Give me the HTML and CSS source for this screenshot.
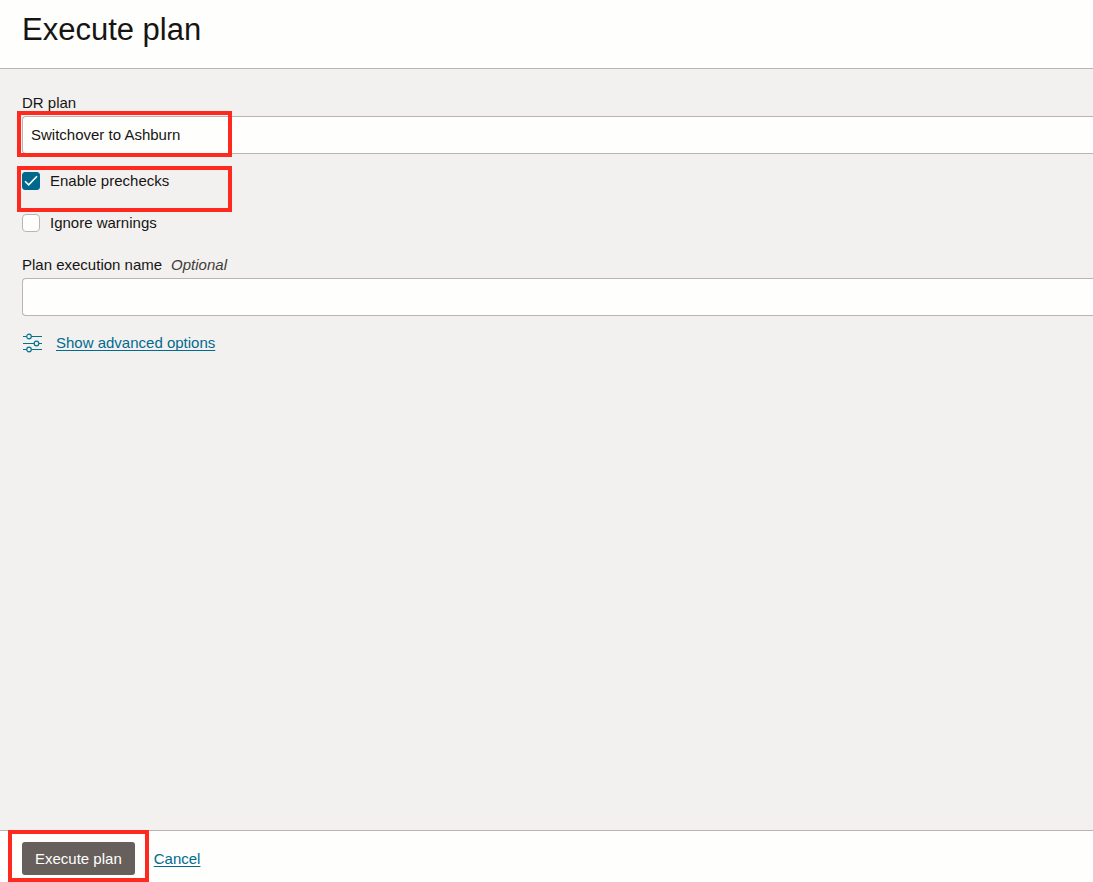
FILE: index.html
```html
<!DOCTYPE html>
<html lang="en">
<head>
<meta charset="utf-8">
<title>Execute plan</title>
<link rel="stylesheet" href="styles.css">
</head>
<body>
<form class="panel">
  <header class="panel-header">
    <h1 class="panel-title">Execute plan</h1>
  </header>
  <main class="panel-body">
    <div class="field">
      <label class="field-label" for="plan">DR plan</label>
      <div class="control marked">
        <select class="input" id="plan">
          <option>Switchover to Ashburn</option>
        </select>
      </div>
    </div>
    <div class="checks">
      <div class="check-row marked">
        <input class="check" type="checkbox" id="prechecks" checked>
        <svg class="tick" viewBox="0 0 18 18" aria-hidden="true"><path d="M3 9.2 6.7 12.8 15 4.2"/></svg>
        <label for="prechecks">Enable prechecks</label>
      </div>
      <div class="check-row">
        <input class="check" type="checkbox" id="warnings">
        <label for="warnings">Ignore warnings</label>
      </div>
    </div>
    <div class="field">
      <label class="field-label" for="name">Plan execution name <em class="optional">Optional</em></label>
      <div class="control">
        <input class="input" type="text" id="name">
      </div>
    </div>
    <div class="advanced">
      <svg class="sliders" viewBox="0 0 20 20" aria-hidden="true">
        <path d="M0 3.500H3.500M8.500 3.500H19M0 10.500H11M16 10.500H19M0 16.500H3.500M8.500 16.500H19"/>
        <circle cx="6" cy="3.500" r="2.300"/>
        <circle cx="13.500" cy="10.500" r="2.300"/>
        <circle cx="6" cy="16.500" r="2.300"/>
      </svg>
      <a class="link" href="#">Show advanced options</a>
    </div>
  </main>
  <footer class="panel-footer">
    <div class="action marked">
      <button class="button" type="button">Execute plan</button>
    </div>
    <a class="link" href="#">Cancel</a>
  </footer>
</form>
</body>
</html>
```
FILE: styles.css
```css
*,
*::after {
  box-sizing: border-box;
}

body {
  margin: 0;
  background: #f3f1f0;
  color: #161513;
  font: 15px/20px "Liberation Sans", Arial, sans-serif;
}

.panel {
  display: flex;
  flex-direction: column;
  min-height: 100vh;
}

.panel-header {
  padding: 12px 22px 20px;
  background: #fefefc;
  border-bottom: 1px solid #bbb4b0;
}

.panel-title {
  margin: 0;
  font-size: 31px;
  line-height: 36px;
  font-weight: 400;
}

.panel-body {
  flex: 1;
  display: flex;
  flex-direction: column;
  padding: 24px 0 24px 22px;
}

.field {
  display: flex;
  flex-direction: column;
  gap: 3px;
}

.field-label {
  display: flex;
  gap: 9px;
}

.optional {
  color: #403c38;
}

.control {
  display: flex;
}

.input {
  appearance: none;
  flex: 1;
  min-width: 0;
  height: 38px;
  margin: 0;
  padding: 0 8px;
  border: 1px solid #bbb4b0;
  border-right: 0;
  border-radius: 4px 0 0 4px;
  background: #fefefc;
  color: inherit;
  font: inherit;
}

.checks {
  display: flex;
  flex-direction: column;
  gap: 22px;
  padding: 17px 0 22px;
}

.check-row {
  display: flex;
  align-items: center;
  gap: 10px;
  height: 20px;
}

.check {
  appearance: none;
  width: 18px;
  height: 18px;
  margin: 0;
  border: 1px solid #bbb4b0;
  border-radius: 4px;
  background: #fefefc;
}

.check:checked {
  border-color: #00688c;
  border-radius: 3px;
  background: #00688c;
}

.tick {
  position: absolute;
  left: 0;
  width: 18px;
  height: 18px;
  fill: none;
  stroke: #fff;
  stroke-width: 1.6;
  pointer-events: none;
}

.check:not(:checked) + .tick {
  display: none;
}

.advanced {
  display: flex;
  align-items: center;
  gap: 13px;
  padding-top: 17px;
}

.sliders {
  width: 20px;
  height: 20px;
  margin-left: 1px;
  fill: none;
  stroke: #00738f;
  stroke-width: 1.2;
}

.link {
  color: #006b8f;
  text-decoration: underline;
  text-decoration-thickness: 1px;
  text-underline-offset: 2px;
  text-decoration-skip-ink: none;
}

.panel-footer {
  display: flex;
  align-items: center;
  gap: 19px;
  padding: 11px 22px 7px;
  background: #fefefc;
  border-top: 1px solid #bbb4b0;
}

.button {
  height: 33px;
  padding: 0 13px;
  border: 0;
  border-radius: 3px;
  background: #665f5b;
  color: #fff;
  font: inherit;
}

/* Red call-out frames */
.marked {
  position: relative;
}

.marked::after {
  content: "";
  position: absolute;
  top: -5px;
  left: -5px;
  width: 215px;
  height: 46px;
  border: 4px solid #ff2a1f;
  pointer-events: none;
}

.action.marked::after {
  top: -12px;
  left: -14px;
  width: 141px;
  height: 52px;
}
```
